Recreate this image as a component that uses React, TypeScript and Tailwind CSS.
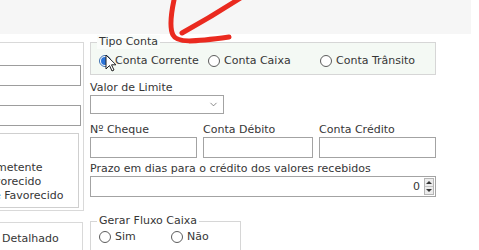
import { ChevronDown } from "lucide-react";

function Radio({ checked = false }: { checked?: boolean }) {
  return (
    <span
      className={`flex h-[12px] w-[12px] shrink-0 items-center justify-center rounded-full border bg-white ${
        checked ? "border-[#3d6fb0]" : "border-[#5c5c5c]"
      }`}
    >
      {checked && <span className="h-[8px] w-[8px] rounded-full bg-[#2b74d8]" />}
    </span>
  );
}

function Option({ label, checked, w }: { label: string; checked?: boolean; w: string }) {
  return (
    <label className={`flex items-center gap-[4px] ${w}`}>
      <Radio checked={checked} />
      <span>{label}</span>
    </label>
  );
}

function Field({ label, w }: { label: string; w: string }) {
  return (
    <div className={`flex flex-col ${w}`}>
      <span className="leading-[14px]">{label}</span>
      <div className="h-[21px] border border-[#a3a3a3] bg-white" />
    </div>
  );
}

function LeftColumn() {
  return (
    <div className="w-[84px] shrink-0 pt-[8px]">
      {/* group with the filter inputs, mostly cut off on the left */}
      <div className="-ml-[10px] flex h-[169px] w-[94px] flex-col border border-[#d9d9d9] pr-[2px]">
        <div className="mt-[22px] h-[21px] border border-[#9d9d9d] bg-white" />
        <div className="mt-[19px] h-[21px] border border-[#9d9d9d] bg-white" />
        <div className="mt-[7px] mr-[2px] flex h-[75px] flex-col justify-end overflow-hidden border border-[#cfcfcf] pb-[4px] leading-[14px]">
          <span className="-ml-[10px] whitespace-nowrap">Remetente</span>
          <span className="-ml-[10px] whitespace-nowrap">Favorecido</span>
          <span className="ml-[2px] whitespace-nowrap">e Favorecido</span>
        </div>
      </div>
      <div className="-ml-[10px] mt-[11px] h-[48px] w-[93px] border border-[#d9d9d9] pl-[11px] pt-[9px] leading-[14px]">
        Detalhado
      </div>
    </div>
  );
}

function RightColumn() {
  return (
    <div className="ml-[6px] flex w-[346px] flex-col pt-[8px]">
      {/* Tipo Conta */}
      <div className="relative h-[33px] border border-[#d6d6d6] bg-[#f4f9f4] pl-[8px] pt-[11px]">
        <span className="absolute -top-[8px] left-[6px] bg-[#fafcfa] px-[2px] leading-[14px]">Tipo Conta</span>
        <div className="flex items-center leading-[14px]">
          <Option label="Conta Corrente" checked w="w-[109px]" />
          <Option label="Conta Caixa" w="w-[112px]" />
          <Option label="Conta Trânsito" w="w-[110px]" />
        </div>
      </div>

      <span className="mt-[6px] leading-[14px]">Valor de Limite</span>
      <div className="flex h-[19px] w-[134px] items-center justify-end border border-[#a3a3a3] bg-white pr-[4px]">
        <ChevronDown className="h-[11px] w-[11px] text-[#555]" strokeWidth={1.5} />
      </div>

      <div className="mt-[9px] flex gap-[6px]">
        <Field label="Nº Cheque" w="w-[107px]" />
        <Field label="Conta Débito" w="w-[110px]" />
        <Field label="Conta Crédito" w="w-[117px]" />
      </div>

      <span className="mt-[4px] leading-[14px]">Prazo em dias para o crédito dos valores recebidos</span>
      <div className="flex h-[21px] items-center justify-end border border-[#a3a3a3] bg-white pr-[1px]">
        <span className="mr-[4px] leading-[14px]">0</span>
        <div className="flex h-[17px] w-[10px] flex-col border border-[#b5b5b5] bg-[#ececec]">
          <div className="flex flex-1 items-center justify-center border-b border-[#c4c4c4]">
            <span className="h-0 w-0 border-x-[3px] border-b-[3px] border-x-transparent border-b-[#333]" />
          </div>
          <div className="flex flex-1 items-center justify-center">
            <span className="h-0 w-0 border-x-[3px] border-t-[3px] border-x-transparent border-t-[#333]" />
          </div>
        </div>
      </div>

      {/* Gerar Fluxo Caixa */}
      <div className="relative mt-[24px] h-[50px] w-[151px] border border-[#d6d6d6] pl-[8px] pt-[8px]">
        <span className="absolute -top-[8px] left-[6px] bg-white px-[2px] leading-[14px]">Gerar Fluxo Caixa</span>
        <div className="flex items-center leading-[14px]">
          <Option label="Sim" w="w-[72px]" />
          <Option label="Não" w="w-[60px]" />
        </div>
      </div>
    </div>
  );
}

export default function App() {
  return (
    <div className="relative h-[250px] w-[479px] overflow-hidden bg-white font-['DejaVu_Sans',sans-serif] text-[11px] text-[#363636]">
      <div className="h-[34px] w-[471px] bg-[#f6f6f6]" />
      <div className="flex">
        <LeftColumn />
        <RightColumn />
      </div>

      {/* red annotation arrow */}
      <svg className="pointer-events-none absolute left-0 top-0" width="479" height="60" viewBox="0 0 479 60">
        <path
          d="M174 0 C171 14 169 27 173 35 C177 43 192 42 229 37"
          fill="none"
          stroke="#ea2a1f"
          strokeWidth="5"
          strokeLinecap="round"
        />
        <path d="M242 -3 C222 10 200 23 182 33" fill="none" stroke="#ea2a1f" strokeWidth="5" strokeLinecap="round" />
      </svg>

      {/* mouse pointer */}
      <svg className="pointer-events-none absolute left-[105px] top-[54px]" width="12" height="19" viewBox="0 0 12 19">
        <path d="M1 1 L1 15 L4.5 11.5 L7 17 L9 16 L6.5 10.8 L11 10.8 Z" fill="#fff" stroke="#222" strokeWidth="1" strokeLinejoin="round" />
      </svg>
    </div>
  );
}
